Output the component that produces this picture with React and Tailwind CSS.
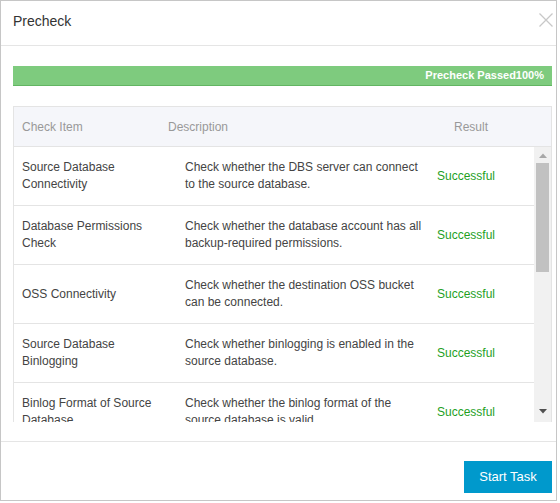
import React from "react";

const font = "font-['Liberation_Sans',Arial,sans-serif]";

const rows = [
  {
    item: "Source Database Connectivity",
    desc: "Check whether the DBS server can connect to the source database.",
  },
  {
    item: "Database Permissions Check",
    desc: "Check whether the database account has all backup-required permissions.",
  },
  {
    item: "OSS Connectivity",
    desc: "Check whether the destination OSS bucket can be connected.",
  },
  {
    item: "Source Database Binlogging",
    desc: "Check whether binlogging is enabled in the source database.",
  },
  {
    item: "Binlog Format of Source Database",
    desc: "Check whether the binlog format of the source database is valid.",
  },
];

function CloseIcon() {
  return (
    <svg width="14" height="14" viewBox="0 0 14 14" fill="none">
      <path d="M0.5 0.5L13.5 13.5M13.5 0.5L0.5 13.5" stroke="#c8c8c8" strokeWidth="1.3" />
    </svg>
  );
}

// fake scrollbar, drawn to match the old-style windows one
function Scrollbar() {
  return (
    <div className="w-[17px] h-full bg-[#f1f1f1] flex flex-col items-center shrink-0">
      <div className="h-[16px] flex items-center justify-center">
        <svg width="8" height="5" viewBox="0 0 8 5">
          <path d="M0 5L4 0.5L8 5Z" fill="#a8a8a8" />
        </svg>
      </div>
      <div className="w-[13px] h-[109px] bg-[#c1c1c1]" />
      <div className="flex-1" />
      <div className="h-[16px] flex items-center justify-center mb-[3px]">
        <svg width="8" height="5" viewBox="0 0 8 5">
          <path d="M0 0L8 0L4 4.5Z" fill="#505050" />
        </svg>
      </div>
    </div>
  );
}

export default function App() {
  return (
    <div className={`w-[560px] h-[503px] bg-white ${font}`}>
      <div className="w-[557px] h-[501px] border border-[#c6c6c6] flex flex-col bg-white">
        {/* header */}
        <div className="h-[45px] shrink-0 border-b border-[#e5e5e5] flex items-center justify-between pl-[12px] pr-[3px]">
          <span className="text-[14px] text-[#333] mt-[-4px]">Precheck</span>
          <div className="mt-[-6px]">
            <CloseIcon />
          </div>
        </div>

        {/* body */}
        <div className="flex-1 flex flex-col pl-[12px] pr-[4px] pt-[20px]">
          <div className="h-[20px] bg-[#7ecb7e] border-b border-[#62b562] flex items-center justify-end pr-[8px]">
            <span className="text-[11px] font-bold text-white leading-none">
              Precheck Passed100%
            </span>
          </div>

          <div className="mt-[20px] border-x border-t border-[#e4e4e4]">
            <div className="h-[40px] bg-[#f5f6fa] border-b border-[#e4e4e4] flex items-center text-[12px] text-[#999]">
              <div className="w-[146px] pl-[8px]">Check Item</div>
              <div className="w-[285px] pl-[8px]">Description</div>
              <div className="flex-1 pl-[9px]">Result</div>
            </div>

            <div className="h-[275px] flex overflow-hidden">
              <div className="flex-1 overflow-hidden">
                {rows.map((r) => (
                  <div
                    key={r.item}
                    className="h-[59px] shrink-0 border-b border-[#e4e4e4] flex items-center text-[12px] leading-[17px] text-[#444]"
                  >
                    <div className="w-[162px] pl-[8px] pr-[8px]">{r.item}</div>
                    <div className="w-[252px] pl-[9px] pr-[3px]">{r.desc}</div>
                    <div className="flex-1 pl-[9px] text-[#1f9f1f]">Successful</div>
                  </div>
                ))}
              </div>
              <Scrollbar />
            </div>
          </div>
        </div>

        {/* footer */}
        <div className="h-[59px] shrink-0 border-t border-[#e5e5e5] flex justify-end pr-[4px] pt-[19px]">
          <button className="w-[88px] h-[32px] bg-[#0099cc] text-white text-[13px]">
            Start Task
          </button>
        </div>
      </div>
    </div>
  );
}
